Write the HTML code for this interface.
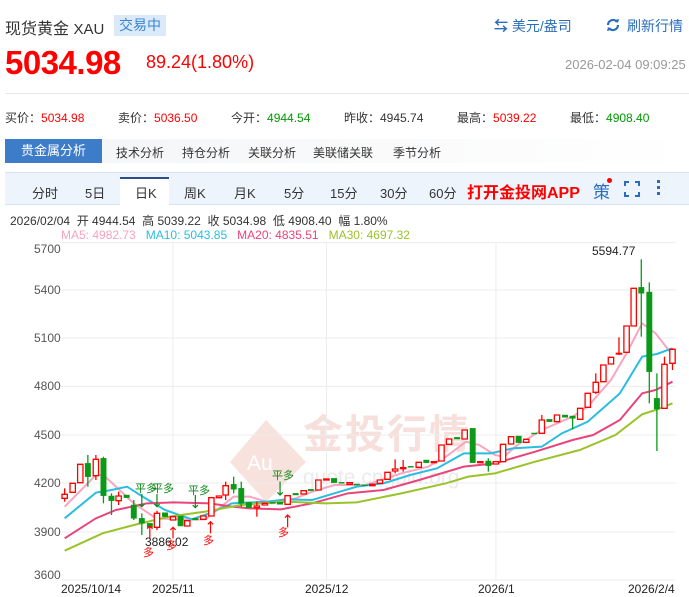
<!DOCTYPE html>
<html><head><meta charset="utf-8"><style>
*{margin:0;padding:0;box-sizing:border-box}
body{width:689px;height:597px;overflow:hidden;background:#fff;font-family:"Liberation Sans","Noto Sans CJK SC",sans-serif;color:#333;position:relative}
.a{position:absolute;white-space:nowrap}
.red{color:#f00}.grn{color:#090}
</style></head><body>
<div class="a" style="left:5px;top:15px;font-size:16px;color:#333">现货黄金 <span style="font-size:15px">XAU</span></div>
<div class="a" style="left:114px;top:15px;width:52px;height:21px;background:#dbeafb;color:#3a86cc;font-size:14px;line-height:21px;text-align:center">交易中</div>
<div class="a" style="left:494px;top:16px;font-size:14px;color:#2a6ebb"><span style="font-weight:bold">⇆</span> 美元/盎司</div>
<svg class="a" style="left:605px;top:17px" width="16" height="16" viewBox="0 0 16 16"><path d="M3 8a5 5 0 0 1 9-3" stroke="#2a6ebb" stroke-width="2.2" fill="none"/><path d="M13 8a5 5 0 0 1-9 3" stroke="#2a6ebb" stroke-width="2.2" fill="none"/><path d="M10 3l4-1-1 4z M6 13l-4 1 1-4z" fill="#2a6ebb"/></svg>
<div class="a" style="left:627px;top:16px;font-size:14px;color:#2a6ebb">刷新行情</div>
<div class="a red" style="left:5px;top:44px;font-size:33px;font-weight:bold;letter-spacing:-0.5px">5034.98</div>
<div class="a red" style="left:146px;top:52px;font-size:18px">89.24(1.80%)</div>
<div class="a" style="left:565px;top:57px;font-size:13px;color:#999">2026-02-04 09:09:25</div>
<div class="a" style="left:5px;top:93px;width:684px;height:1px;background:#e8e8e8"></div>
<div class="a" style="left:5px;top:109px;font-size:12px">买价：<span class="red">5034.98</span></div>
<div class="a" style="left:118px;top:109px;font-size:12px">卖价：<span class="red">5036.50</span></div>
<div class="a" style="left:231px;top:109px;font-size:12px">今开：<span class="grn">4944.54</span></div>
<div class="a" style="left:344px;top:109px;font-size:12px">昨收：4945.74</div>
<div class="a" style="left:457px;top:109px;font-size:12px">最高：<span class="red">5039.22</span></div>
<div class="a" style="left:570px;top:109px;font-size:12px">最低：<span class="grn">4908.40</span></div>
<div class="a" style="left:5px;top:139px;width:684px;height:24px;background:linear-gradient(90deg,#f3f4f6,#fff)"></div>
<div class="a" style="left:5px;top:139px;width:97px;height:24px;background:#3d7cc9;color:#fff;font-size:13px;line-height:24px;text-align:center">贵金属分析</div>
<div class="a" style="left:116px;top:144px;font-size:12px;color:#333">技术分析</div>
<div class="a" style="left:182px;top:144px;font-size:12px">持仓分析</div>
<div class="a" style="left:248px;top:144px;font-size:12px">关联分析</div>
<div class="a" style="left:313px;top:144px;font-size:12px">美联储关联</div>
<div class="a" style="left:393px;top:144px;font-size:12px">季节分析</div>
<div class="a" style="left:5px;top:172px;width:684px;height:33px;background:#eef4fb;border-top:1px solid #d5e3f2;border-bottom:1px solid #d5e3f2"></div>
<div class="a" style="left:120px;top:177px;width:49px;height:28px;background:#fff;border-top:2px solid #2a4f8a"></div>
<div class="a" style="left:0;top:183px;font-size:13px;color:#333">
<span class="a" style="left:32px">分时</span><span class="a" style="left:85px">5日</span><span class="a" style="left:135px">日K</span><span class="a" style="left:184px">周K</span><span class="a" style="left:234px">月K</span><span class="a" style="left:284px">5分</span><span class="a" style="left:330px">15分</span><span class="a" style="left:380px">30分</span><span class="a" style="left:429px">60分</span></div>
<div class="a red" style="left:467px;top:179px;font-size:16px;font-weight:bold">打开金投网APP</div>
<div class="a" style="left:593px;top:178px;font-size:17px;color:#2a6ebb">策</div>
<div class="a" style="left:607px;top:178px;width:5px;height:5px;border-radius:50%;background:#f00"></div>
<svg class="a" style="left:624px;top:181px" width="16" height="16"><path d="M1 5V1h4M11 1h4v4M15 11v4h-4M5 15H1v-4" stroke="#2a6ebb" stroke-width="2" fill="none"/></svg>
<div class="a" style="left:657px;top:180px;width:3px;height:3px;background:#2a6ebb;box-shadow:0 6px 0 #2a6ebb,0 12px 0 #2a6ebb"></div>
<div class="a" style="left:10px;top:212px;font-size:12px">2026/02/04 &nbsp;开 4944.54 &nbsp;高 5039.22 &nbsp;收 5034.98 &nbsp;低 4908.40 &nbsp;幅 1.80%</div>
<div class="a" style="left:61px;top:228px;font-size:12px"><span style="color:#f6a3c0">MA5: 4982.73</span> &nbsp; <span style="color:#2bbde0">MA10: 5043.85</span> &nbsp; <span style="color:#e8457a">MA20: 4835.51</span> &nbsp; <span style="color:#9bc22a">MA30: 4697.32</span></div>

<svg class="a" style="left:228px;top:418px" width="80" height="86" viewBox="0 0 80 86"><path d="M38 2 L78 44 L38 84 L2 44Z" fill="#f8e2dd"/></svg>
<div class="a" style="left:303px;top:411px;font-size:40px;line-height:48px;color:#f7e0dc;font-weight:bold;letter-spacing:2px">金投行情</div>
<div class="a" style="left:247px;top:452px;font-size:21px;line-height:24px;color:#fff">Au</div>
<div class="a" style="left:303px;top:465px;font-size:21px;line-height:26px;color:#ebebeb">quote.cngold.org</div>

<svg class="a" style="left:0;top:240px" width="689" height="357" viewBox="0 0 1545 1071" preserveAspectRatio="none">
<g stroke="#ececec">
<line x1="138" x2="1515" y1="8" y2="8" vector-effect="non-scaling-stroke"/>
<line x1="138" x2="1515" y1="150" y2="150" vector-effect="non-scaling-stroke"/>
<line x1="138" x2="1515" y1="294" y2="294" vector-effect="non-scaling-stroke"/>
<line x1="138" x2="1515" y1="439" y2="439" vector-effect="non-scaling-stroke"/>
<line x1="138" x2="1515" y1="585" y2="585" vector-effect="non-scaling-stroke"/>
<line x1="138" x2="1515" y1="729" y2="729" vector-effect="non-scaling-stroke"/>
<line x1="138" x2="1515" y1="876" y2="876" vector-effect="non-scaling-stroke"/>
<line x1="138" x2="1515" y1="1020" y2="1020" vector-effect="non-scaling-stroke"/>
<line x1="388" x2="388" y1="8" y2="1020" vector-effect="non-scaling-stroke"/>
<line x1="732" x2="732" y1="8" y2="1020" vector-effect="non-scaling-stroke"/>
<line x1="1112" x2="1112" y1="8" y2="1020" vector-effect="non-scaling-stroke"/>
</g>
<g fill="none" stroke-width="2">
<polyline vector-effect="non-scaling-stroke" stroke="#f8a5c2" points="145,800 215,705 232,705 300,790 350,835 405,838 460,838 524,770 560,770 610,790 663,775 700,755 750,735 820,735 900,700 960,680 1000,650 1045,605 1075,615 1110,645 1130,650 1160,615 1215,570 1284,530 1318,500 1370,420 1405,340 1440,250 1470,280 1508,345"/>
<polyline vector-effect="non-scaling-stroke" stroke="#2bbde0" points="145,835 215,758 250,750 285,740 320,770 370,810 430,838 470,820 520,790 600,785 640,778 700,780 750,760 800,740 860,730 920,705 980,685 1040,640 1100,640 1150,625 1215,620 1260,580 1318,545 1390,460 1440,350 1473,342 1508,325"/>
<polyline vector-effect="non-scaling-stroke" stroke="#e8457a" points="145,895 215,835 260,810 330,790 390,787 470,790 520,800 560,805 630,808 700,790 780,760 860,750 940,720 1040,680 1110,670 1200,635 1284,600 1330,585 1390,540 1440,460 1470,450 1508,425"/>
<polyline vector-effect="non-scaling-stroke" stroke="#9bc22a" points="145,932 230,880 300,855 380,830 460,815 540,795 640,785 730,790 800,787 900,760 1000,730 1050,710 1110,700 1200,665 1300,630 1380,585 1440,523 1470,510 1508,490"/>
</g>
<g stroke-width="1.3">
<g stroke="#f00" fill="#fff">
<line vector-effect="non-scaling-stroke" x1="145" x2="145" y1="745" y2="785"/><rect vector-effect="non-scaling-stroke" x="139" y="763" width="12" height="12"/>
<rect vector-effect="non-scaling-stroke" x="157" y="730" width="12" height="27"/>
<rect vector-effect="non-scaling-stroke" x="174" y="673" width="12" height="55"/>
<line vector-effect="non-scaling-stroke" x1="215" x2="215" y1="645" y2="720"/><rect vector-effect="non-scaling-stroke" x="209" y="658" width="12" height="49"/>
<line vector-effect="non-scaling-stroke" x1="266" x2="266" y1="755" y2="795"/><rect vector-effect="non-scaling-stroke" x="260" y="768" width="12" height="14"/>
<line vector-effect="non-scaling-stroke" x1="352" x2="352" y1="812" y2="870"/><rect vector-effect="non-scaling-stroke" x="346" y="820" width="12" height="42"/>
<rect vector-effect="non-scaling-stroke" x="382" y="830" width="12" height="10"/>
<rect vector-effect="non-scaling-stroke" x="414" y="842" width="12" height="16"/>
<rect vector-effect="non-scaling-stroke" x="450" y="828" width="12" height="10"/>
<rect vector-effect="non-scaling-stroke" x="468" y="773" width="12" height="55"/>
<rect vector-effect="non-scaling-stroke" x="485" y="768" width="12" height="5"/>
<line vector-effect="non-scaling-stroke" x1="506" x2="506" y1="725" y2="780"/><rect vector-effect="non-scaling-stroke" x="500" y="737" width="12" height="28"/>
<line vector-effect="non-scaling-stroke" x1="576" x2="576" y1="785" y2="830"/><rect vector-effect="non-scaling-stroke" x="570" y="798" width="12" height="5"/>
<rect vector-effect="non-scaling-stroke" x="588" y="790" width="12" height="5"/>
<rect vector-effect="non-scaling-stroke" x="639" y="767" width="12" height="26"/>
<rect vector-effect="non-scaling-stroke" x="675" y="752" width="12" height="10"/>
<rect vector-effect="non-scaling-stroke" x="708" y="720" width="12" height="30"/>
<rect vector-effect="non-scaling-stroke" x="726" y="717" width="12" height="3"/>
<rect vector-effect="non-scaling-stroke" x="778" y="728" width="12" height="5"/>
<rect vector-effect="non-scaling-stroke" x="829" y="733" width="12" height="4"/>
<rect vector-effect="non-scaling-stroke" x="846" y="720" width="12" height="10"/>
<rect vector-effect="non-scaling-stroke" x="863" y="697" width="12" height="21"/>
<line vector-effect="non-scaling-stroke" x1="886" x2="886" y1="658" y2="700"/><rect vector-effect="non-scaling-stroke" x="880" y="687" width="12" height="6"/>
<line vector-effect="non-scaling-stroke" x1="904" x2="904" y1="660" y2="695"/><rect vector-effect="non-scaling-stroke" x="898" y="683" width="12" height="3"/>
<rect vector-effect="non-scaling-stroke" x="933" y="667" width="12" height="15"/>
<rect vector-effect="non-scaling-stroke" x="967" y="665" width="12" height="3"/>
<rect vector-effect="non-scaling-stroke" x="984" y="615" width="12" height="48"/>
<rect vector-effect="non-scaling-stroke" x="1001" y="597" width="12" height="16"/>
<rect vector-effect="non-scaling-stroke" x="1036" y="570" width="12" height="27"/>
<rect vector-effect="non-scaling-stroke" x="1071" y="665" width="12" height="3"/>
<rect vector-effect="non-scaling-stroke" x="1106" y="665" width="12" height="7"/>
<rect vector-effect="non-scaling-stroke" x="1122" y="613" width="12" height="52"/>
<rect vector-effect="non-scaling-stroke" x="1140" y="590" width="12" height="22"/>
<rect vector-effect="non-scaling-stroke" x="1174" y="598" width="12" height="9"/>
<line vector-effect="non-scaling-stroke" x1="1215" x2="1215" y1="525" y2="582"/><rect vector-effect="non-scaling-stroke" x="1209" y="540" width="12" height="40"/>
<rect vector-effect="non-scaling-stroke" x="1243" y="525" width="12" height="20"/>
<rect vector-effect="non-scaling-stroke" x="1295" y="505" width="12" height="33"/>
<rect vector-effect="non-scaling-stroke" x="1312" y="460" width="12" height="42"/>
<line vector-effect="non-scaling-stroke" x1="1336" x2="1336" y1="400" y2="462"/><rect vector-effect="non-scaling-stroke" x="1330" y="427" width="12" height="30"/>
<rect vector-effect="non-scaling-stroke" x="1347" y="375" width="12" height="50"/>
<rect vector-effect="non-scaling-stroke" x="1364" y="352" width="12" height="20"/>
<line vector-effect="non-scaling-stroke" x1="1388" x2="1388" y1="292" y2="345"/><rect vector-effect="non-scaling-stroke" x="1382" y="340" width="12" height="2"/>
<rect vector-effect="non-scaling-stroke" x="1399" y="258" width="12" height="79"/>
<rect vector-effect="non-scaling-stroke" x="1415" y="145" width="12" height="113"/>
<line vector-effect="non-scaling-stroke" x1="1490" x2="1490" y1="350" y2="505"/><rect vector-effect="non-scaling-stroke" x="1484" y="373" width="12" height="132"/>
<line vector-effect="non-scaling-stroke" x1="1508" x2="1508" y1="325" y2="390"/><rect vector-effect="non-scaling-stroke" x="1502" y="328" width="12" height="42"/>
</g>
<g stroke="#0a9a18" fill="#0a9a18">
<line vector-effect="non-scaling-stroke" x1="197" x2="197" y1="645" y2="740"/><rect x="191" y="670" width="12" height="40"/>
<line vector-effect="non-scaling-stroke" x1="232" x2="232" y1="650" y2="790"/><rect x="226" y="655" width="12" height="112"/>
<line vector-effect="non-scaling-stroke" x1="250" x2="250" y1="760" y2="825"/><rect x="244" y="768" width="12" height="14"/>
<rect x="278" y="765" width="12" height="8"/>
<line vector-effect="non-scaling-stroke" x1="300" x2="300" y1="780" y2="840"/><rect x="294" y="795" width="12" height="40"/>
<line vector-effect="non-scaling-stroke" x1="318" x2="318" y1="820" y2="885"/><rect x="312" y="835" width="12" height="15"/>
<rect x="330" y="850" width="12" height="12"/>
<rect x="364" y="818" width="12" height="12"/>
<rect x="399" y="828" width="12" height="30"/>
<rect x="432" y="835" width="12" height="5"/>
<line vector-effect="non-scaling-stroke" x1="524" x2="524" y1="710" y2="760"/><rect x="518" y="733" width="12" height="15"/>
<line vector-effect="non-scaling-stroke" x1="541" x2="541" y1="725" y2="800"/><rect x="535" y="745" width="12" height="45"/>
<rect x="552" y="787" width="12" height="16"/>
<rect x="605" y="787" width="12" height="3"/>
<rect x="622" y="787" width="12" height="6"/>
<rect x="657" y="760" width="12" height="5"/>
<rect x="691" y="748" width="12" height="4"/>
<rect x="743" y="715" width="12" height="13"/>
<rect x="760" y="727" width="12" height="3"/>
<rect x="794" y="732" width="12" height="3"/>
<rect x="812" y="735" width="12" height="2"/>
<rect x="915" y="679" width="12" height="3"/>
<rect x="950" y="660" width="12" height="8"/>
<rect x="1019" y="592" width="12" height="5"/>
<rect x="1054" y="565" width="12" height="103"/>
<line vector-effect="non-scaling-stroke" x1="1095" x2="1095" y1="655" y2="695"/><rect x="1089" y="663" width="12" height="14"/>
<rect x="1157" y="588" width="12" height="20"/>
<rect x="1192" y="579" width="12" height="3"/>
<rect x="1226" y="538" width="12" height="7"/>
<rect x="1261" y="525" width="12" height="7"/>
<line vector-effect="non-scaling-stroke" x1="1284" x2="1284" y1="528" y2="568"/><rect x="1278" y="528" width="12" height="7"/>
<line vector-effect="non-scaling-stroke" x1="1438" x2="1438" y1="58" y2="290"/><rect x="1432" y="142" width="12" height="18"/>
<line vector-effect="non-scaling-stroke" x1="1456" x2="1456" y1="127" y2="490"/><rect x="1450" y="156" width="12" height="239"/>
<line vector-effect="non-scaling-stroke" x1="1473" x2="1473" y1="400" y2="633"/><rect x="1467" y="475" width="12" height="32"/>
</g>
</g>
<g stroke-width="1.2" fill="none">
<path vector-effect="non-scaling-stroke" stroke="#0a8a18" d="M318 762V800M312 792L318 800L324 792 M352 762V800M346 792L352 800L358 792 M438 765V803M432 795L438 803L444 795 M628 725V765M622 757L628 765L634 757"/>
<path vector-effect="non-scaling-stroke" stroke="#f00" d="M336 895V858M330 866L336 858L342 866 M388 895V862M382 870L388 862L394 870 M472 880V845M466 853L472 845L478 853 M645 862V825M639 833L645 825L651 833"/>
</g>
</svg>
<div class="a" style="font-size:12px;color:#555;left:34px;top:242px">5700</div>
<div class="a" style="font-size:12px;color:#555;left:34px;top:283px">5400</div>
<div class="a" style="font-size:12px;color:#555;left:34px;top:331px">5100</div>
<div class="a" style="font-size:12px;color:#555;left:34px;top:379px">4800</div>
<div class="a" style="font-size:12px;color:#555;left:34px;top:428px">4500</div>
<div class="a" style="font-size:12px;color:#555;left:34px;top:476px">4200</div>
<div class="a" style="font-size:12px;color:#555;left:34px;top:525px">3900</div>
<div class="a" style="font-size:12px;color:#555;left:34px;top:568px">3600</div>
<div class="a" style="font-size:12px;color:#222;left:592px;top:244px">5594.77</div>
<div class="a" style="font-size:12px;color:#222;left:145px;top:535px">3886.02</div>
<div class="a" style="font-size:11px;color:#0a8a18;left:135px;top:480px">平多</div>
<div class="a" style="font-size:11px;color:#0a8a18;left:152px;top:480px">平多</div>
<div class="a" style="font-size:11px;color:#0a8a18;left:188px;top:482px">平多</div>
<div class="a" style="font-size:11px;color:#0a8a18;left:272px;top:467px">平多</div>
<div class="a" style="font-size:11px;color:#f00;left:143px;top:544px">多</div>
<div class="a" style="font-size:11px;color:#f00;left:166px;top:537px">多</div>
<div class="a" style="font-size:11px;color:#f00;left:203px;top:532px">多</div>
<div class="a" style="font-size:11px;color:#f00;left:278px;top:524px">多</div>
<div class="a" style="font-size:12px;color:#222;left:61px;top:582px">2025/10/14</div>
<div class="a" style="font-size:12px;color:#222;left:152px;top:582px">2025/11</div>
<div class="a" style="font-size:12px;color:#222;left:305px;top:582px">2025/12</div>
<div class="a" style="font-size:12px;color:#222;left:478px;top:582px">2026/1</div>
<div class="a" style="font-size:12px;color:#222;left:628px;top:582px">2026/2/4</div>
</body></html>
